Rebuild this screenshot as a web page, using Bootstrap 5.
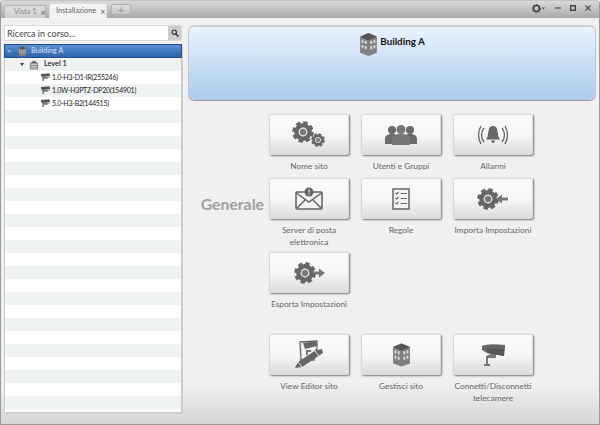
<!DOCTYPE html>
<html lang="it">
<head>
<meta charset="utf-8">
<title>Installazione</title>
<link rel="stylesheet" href="https://cdn.jsdelivr.net/npm/bootstrap@5.3.0/dist/css/bootstrap.min.css">
<style>
html,body{height:100%;margin:0}
body{width:600px;height:425px;overflow:hidden;font-family:"Lato","Open Sans",sans-serif;font-size:8.3px;color:#555;background:#efefef}
.app-win{width:600px;height:425px;border:1px solid #9a9a9a;border-top-color:#c4c4c4;border-radius:4px 4px 0 0;background:linear-gradient(#f0f0f0 0,#f0f0f0 375px,#eee 385px,#d6d6d6 423px);display:flex;flex-direction:column}
.title-strip{height:17px;flex:none;background:linear-gradient(#d9d9d9,#a9a9a9);display:flex;align-items:flex-end;padding-left:3px;gap:3px;border-radius:3px 3px 0 0}
.win-tab{height:13px;width:42px;padding-left:9px;display:flex;align-items:center;gap:4px;color:#888;background:linear-gradient(#dedede,#cfcfcf);border:1px solid #b5b5b5;border-bottom:0;border-radius:3px 3px 0 0;font-size:7.4px;white-space:nowrap}
.win-tab.on{width:58px;height:15px;padding-left:6px;background:#f3f3f3;color:#666;border-color:#ddd;margin-right:1px}
.tab-x{font-size:9px;line-height:1;color:#666}
.add-tab{width:20px;height:11px;margin-bottom:3px;background:linear-gradient(#ddd,#c6c6c6);border:1px solid #b0b0b0;border-radius:2px;color:#999;font-size:12px;line-height:9px;text-align:center}
.win-ctl{margin-left:auto;display:flex;align-items:center;gap:9px;padding:0 8px 3px 0;align-self:center}
.work-area{flex:1;display:flex;min-height:0;padding:7px 3px 0 3px;gap:6px}
.left-col{width:178px;flex:none;height:388px;display:flex;flex-direction:column;gap:3px}
.search-box{height:16px;flex:none;border:1px solid #d8d8d8;background:#fff;display:flex}
.search-box .form-control{border:0;border-radius:0;padding:0 0 0 2px;font-size:9px;color:#444;height:14px;min-height:0;background:transparent;font-family:inherit}
.search-box .form-control::placeholder{color:#444;opacity:1}
.search-go{width:13px;flex:none;background:#ccc;display:flex;align-items:center;justify-content:center}
.tree-box{flex:1;border:1px solid #c9c9c9;border-top:0;background:repeating-linear-gradient(#eff2f2 0,#eff2f2 13px,#fff 13px,#fff 26px) 0 14px no-repeat,#fff;box-shadow:1px 1px 0 #cfcfcf}
.tree-row{height:13px;display:flex;align-items:center;color:#222;white-space:nowrap;font-size:7.3px;margin:0}
.tree-row.sel{height:14px;background:linear-gradient(#5a8fd0,#2d64ad);border:1px solid #23508e;margin:0 -1px;color:#d5e4f6}
.lvl0{padding-left:2px;gap:7px}
.lvl0 span:last-child{margin-left:-3px}
.lvl1{padding-left:15px;gap:5px}
.lvl2{padding-left:35px;gap:1px;font-size:7px;letter-spacing:-.25px}
.arrow{width:0;height:0;border-left:2.5px solid transparent;border-right:2.5px solid transparent;border-top:3px solid #333}
.sel .arrow{border-top-color:#8fb0da}
.right-col{flex:1;min-width:0}
.hero-bar{height:75px;border:1px solid #bdc6d0;border-top:2px solid #c9ced4;border-radius:6px;background:linear-gradient(#e9f3fd,#acccec);display:flex;justify-content:center;align-items:flex-start;gap:2px;padding:5px 0 0 0;font-weight:700;font-size:9.800px;color:#111;box-shadow:0 1px 0 #8f9cb0}
.hero-name{margin-top:2px}
.group-wrap{display:flex;margin-top:14px}
.group-title{width:81px;flex:none;padding:80px 5px 0 0;text-align:right;font-size:15.800px;font-weight:700;color:#a0a0a0;line-height:20px;white-space:nowrap}
.tile-grid{display:grid;grid-template-columns:repeat(3,80px);column-gap:12px}
.tile{text-align:center;color:#666;line-height:12px}
.tile-btn{display:flex;align-items:center;justify-content:center;width:80px;height:41px;padding:0;border:1px solid #d8d8d8;border-radius:2px;background:linear-gradient(#fbfbfb 0,#f6f6f6 50%,#dcdcdc 100%);box-shadow:1px 1px 2px #777;margin-bottom:5px}
.tile-btn:hover{background:linear-gradient(#fbfbfb 0,#f6f6f6 50%,#dcdcdc 100%);border-color:#d8d8d8}
.h1r{height:64px}.h2r{height:74px}.h3r{height:82px}
.tile-label{display:block;margin:0 -6px}
</style>
</head>
<body>
<svg width="0" height="0" class="position-absolute">
<defs>
<symbol id="gear" viewBox="0 0 24 24">
<circle cx="12" cy="12" r="9.6" fill="none" stroke="#666" stroke-width="4.400" stroke-dasharray="4.500 3.040"/>
<circle cx="12" cy="12" r="7.200" fill="none" stroke="#666" stroke-width="5"/>
<circle cx="12" cy="12" r="4.800" fill="#ddd"/>
<circle cx="12" cy="12" r="3.400" fill="#777"/>
</symbol>
<symbol id="tower" viewBox="0 0 18 24">
<path d="M9 1 17 4.500V20L9 23 1 20V4.500Z" fill="#808080"/>
<path d="M9 1 17 4.500 9 8 1 4.500Z" fill="#555"/>
<path d="M2.500 7.500h1.700v3H2.500zM5.500 8.500h1.700v3H5.500zM10.800 8.500h1.700v3h-1.700zM13.800 7.500h1.700v3h-1.700zM2.500 12.500h1.700v3H2.500zM5.500 13.500h1.700v3H5.500zM10.800 13.500h1.700v3h-1.700zM13.800 12.500h1.700v3h-1.700z" fill="#dcdcdc"/>
</symbol>
<symbol id="cam" viewBox="0 0 14 11">
<path d="M1 1 12 0 13 4 2 5Z" fill="#555"/>
<path d="M3 5h7v2H5v3H3Z" fill="#777"/>
<path d="M10 5h3v1h-3z" fill="#aaa"/>
</symbol>
</defs>
</svg>
<div class="app-win">
  <div class="title-strip">
    <div class="win-tab"><span>Vista 1</span><span class="tab-x">×</span></div>
    <div class="win-tab on"><span>Installazione</span><span class="tab-x">×</span></div>
    <div class="add-tab">+</div>
    <div class="win-ctl">
      <svg width="14" height="9" viewBox="0 0 14 9"><circle cx="4.500" cy="4.500" r="3" fill="none" stroke="#444" stroke-width="1.600"/><circle cx="4.500" cy="4.500" r="4" fill="none" stroke="#444" stroke-width="1" stroke-dasharray="1.500 1.500"/><path d="M10 3.500h3L11.500 5.500Z" fill="#444"/></svg>
      <svg width="6" height="6" viewBox="0 0 6 6"><path d="M0 3h6" stroke="#555" stroke-width="1.300"/></svg>
      <svg width="6" height="6" viewBox="0 0 6 6"><rect x=".7" y=".7" width="4.600" height="4.600" fill="none" stroke="#444" stroke-width="1.400"/></svg>
      <svg width="6" height="6" viewBox="0 0 6 6"><path d="M.5.5l5 5M5.500.5l-5 5" stroke="#555" stroke-width="1.300"/></svg>
    </div>
  </div>
  <div class="work-area">
    <div class="left-col">
      <div class="search-box">
        <input class="form-control" type="text" placeholder="Ricerca in corso...">
        <span class="search-go"><svg width="8" height="8" viewBox="0 0 8 8"><circle cx="3.200" cy="3.200" r="2.200" fill="none" stroke="#333" stroke-width="1.200"/><path d="M5 5l2.500 2.500" stroke="#333" stroke-width="1.500"/></svg></span>
      </div>
      <div class="tree-box">
        <div class="tree-row sel lvl0"><span class="arrow"></span><svg width="9" height="11"><use href="#tower"/></svg><span>Building A</span></div>
        <div class="tree-row lvl1"><span class="arrow"></span><svg width="10" height="10" viewBox="0 0 11 10"><path d="M5.500 0 10 3H1Z" fill="#666"/><path d="M1 3h9v7H1Z" fill="#888"/><path d="M2 4.500h7M2 6.500h7M2 8.500h7" stroke="#e6e6e6" stroke-width=".8"/></svg><span class="fw-semibold">Level 1</span></div>
        <div class="tree-row lvl2"><svg width="11" height="9"><use href="#cam"/></svg><span>1.0-H3-D1-IR(255246)</span></div>
        <div class="tree-row lvl2"><svg width="11" height="9"><use href="#cam"/></svg><span>1.0W-H3PTZ-DP20(154901)</span></div>
        <div class="tree-row lvl2"><svg width="11" height="9"><use href="#cam"/></svg><span>5.0-H3-B2(144515)</span></div>
      </div>
    </div>
    <div class="right-col">
      <div class="hero-bar">
        <svg width="19" height="25"><use href="#tower"/></svg>
        <span class="hero-name">Building A</span>
      </div>
      <div class="group-wrap">
        <div class="group-title">Generale</div>
        <div class="tile-grid">
          <div class="tile h1r">
            <button type="button" class="btn tile-btn"><svg width="34" height="27" viewBox="0 0 34 27"><use href="#gear" x="0" y="0" width="22" height="22"/><use href="#gear" x="19" y="12" width="14" height="14"/></svg></button>
            <span class="tile-label">Nome sito</span>
          </div>
          <div class="tile h1r">
            <button type="button" class="btn tile-btn"><svg width="32" height="20" viewBox="0 0 32 20"><g fill="#6a6a6a"><circle cx="7" cy="5" r="4"/><circle cx="25" cy="5" r="4"/><path d="M0 19v-5q0-4 5-5h4q4 1 5 5v5ZM18 19v-5q1-4 5-5h4q5 1 5 5v5Z"/></g><circle cx="16" cy="4.500" r="4.500" fill="#777"/><path d="M7 20v-6q1-4 6-5h6q5 1 6 5v6Z" fill="#777"/></svg></button>
            <span class="tile-label">Utenti e Gruppi</span>
          </div>
          <div class="tile h1r">
            <button type="button" class="btn tile-btn"><svg width="30" height="20" viewBox="0 0 30 20"><path d="M15 1q-4 0-4.500 5l-1 6L8 14.500h14L20.500 12l-1-6Q19 1 15 1ZM13 15.500h4q-.5 2.500-2 2.500t-2-2.500Z" fill="#666"/><path d="M6 3Q1 10 6 17M3 1Q-2 10 3 19M24 3q5 7 0 14M27 1q5 9 0 18" fill="none" stroke="#666" stroke-width="1.300"/></svg></button>
            <span class="tile-label">Allarmi</span>
          </div>
          <div class="tile h2r">
            <button type="button" class="btn tile-btn"><svg width="28" height="23" viewBox="0 0 28 23"><rect x="1" y="5" width="26" height="17" rx="1" fill="#f3f3f3" stroke="#666" stroke-width="1.600"/><path d="M1.500 6 14 15 26.500 6M1.500 21.500 10.500 12.500M26.500 21.500 17.500 12.500" fill="none" stroke="#666" stroke-width="1.500"/><circle cx="14" cy="5" r="4.500" fill="#666"/><path d="M14 2.500v3M14 6.500v1" stroke="#fff" stroke-width="1.100"/></svg></button>
            <span class="tile-label">Server di posta<br>elettronica</span>
          </div>
          <div class="tile h2r">
            <button type="button" class="btn tile-btn"><svg width="18" height="22" viewBox="0 0 18 22"><rect x="1" y="1" width="16" height="20" fill="#f4f4f4" stroke="#666" stroke-width="1.500"/><path d="M3.500 5l1 1 2-2M3.500 10l1 1 2-2M3.500 15l1 1 2-2M8.500 5.500H15M8.500 10.500H15M8.500 15.500H15" fill="none" stroke="#666" stroke-width="1.100"/></svg></button>
            <span class="tile-label">Regole</span>
          </div>
          <div class="tile h2r">
            <button type="button" class="btn tile-btn"><svg width="32" height="22" viewBox="0 0 32 22"><use href="#gear" x="0" y="0" width="22" height="22"/><path d="M31 9.500h-6v-3L19 11l6 4.500v-3h6Z" fill="#777"/></svg></button>
            <span class="tile-label">Importa Impostazioni</span>
          </div>
          <div class="tile h3r">
            <button type="button" class="btn tile-btn"><svg width="31" height="22" viewBox="0 0 31 22"><use href="#gear" x="0" y="0" width="22" height="22"/><path d="M19 9.500h6v-3l6 4.500-6 4.500v-3h-6Z" fill="#777"/></svg></button>
            <span class="tile-label">Esporta Impostazioni</span>
          </div>
          <div class="h3r"></div>
          <div class="h3r"></div>
          <div class="tile">
            <button type="button" class="btn tile-btn"><svg width="30" height="29" viewBox="0 0 30 29"><path d="M6 2 23 1V8L21 13 20 20H7Z" fill="#f3f3f3" stroke="#666" stroke-width="1.300"/><path d="M9 3 22 1 23 6 11 9Z" fill="#666"/><path d="M12 10h5v2h-3v3h-2Z" fill="#777"/><path d="M1 28 4 22 22 10 28 9 29 13 8 27Z" fill="#666"/><path d="M4 22 8 27" stroke="#eee" stroke-width="1"/><path d="M21 11l4 5" stroke="#eee" stroke-width="1"/></svg></button>
            <span class="tile-label">View Editor sito</span>
          </div>
          <div class="tile">
            <button type="button" class="btn tile-btn"><svg width="19" height="26"><use href="#tower"/></svg></button>
            <span class="tile-label">Gestisci sito</span>
          </div>
          <div class="tile">
            <button type="button" class="btn tile-btn"><svg width="26" height="24" viewBox="0 0 26 24"><path d="M2 3Q8 0 25 2V5L24 13 7 10 2 7Z" fill="#666"/><path d="M7 5 24 6V13L7 10Z" fill="#555"/><path d="M11 11h5v4H8v6h2v2H4v-2h2v-8Z" fill="#777"/></svg></button>
            <span class="tile-label">Connetti/Disconnetti<br>telecamere</span>
          </div>
        </div>
      </div>
    </div>
  </div>
</div>
</body>
</html>
